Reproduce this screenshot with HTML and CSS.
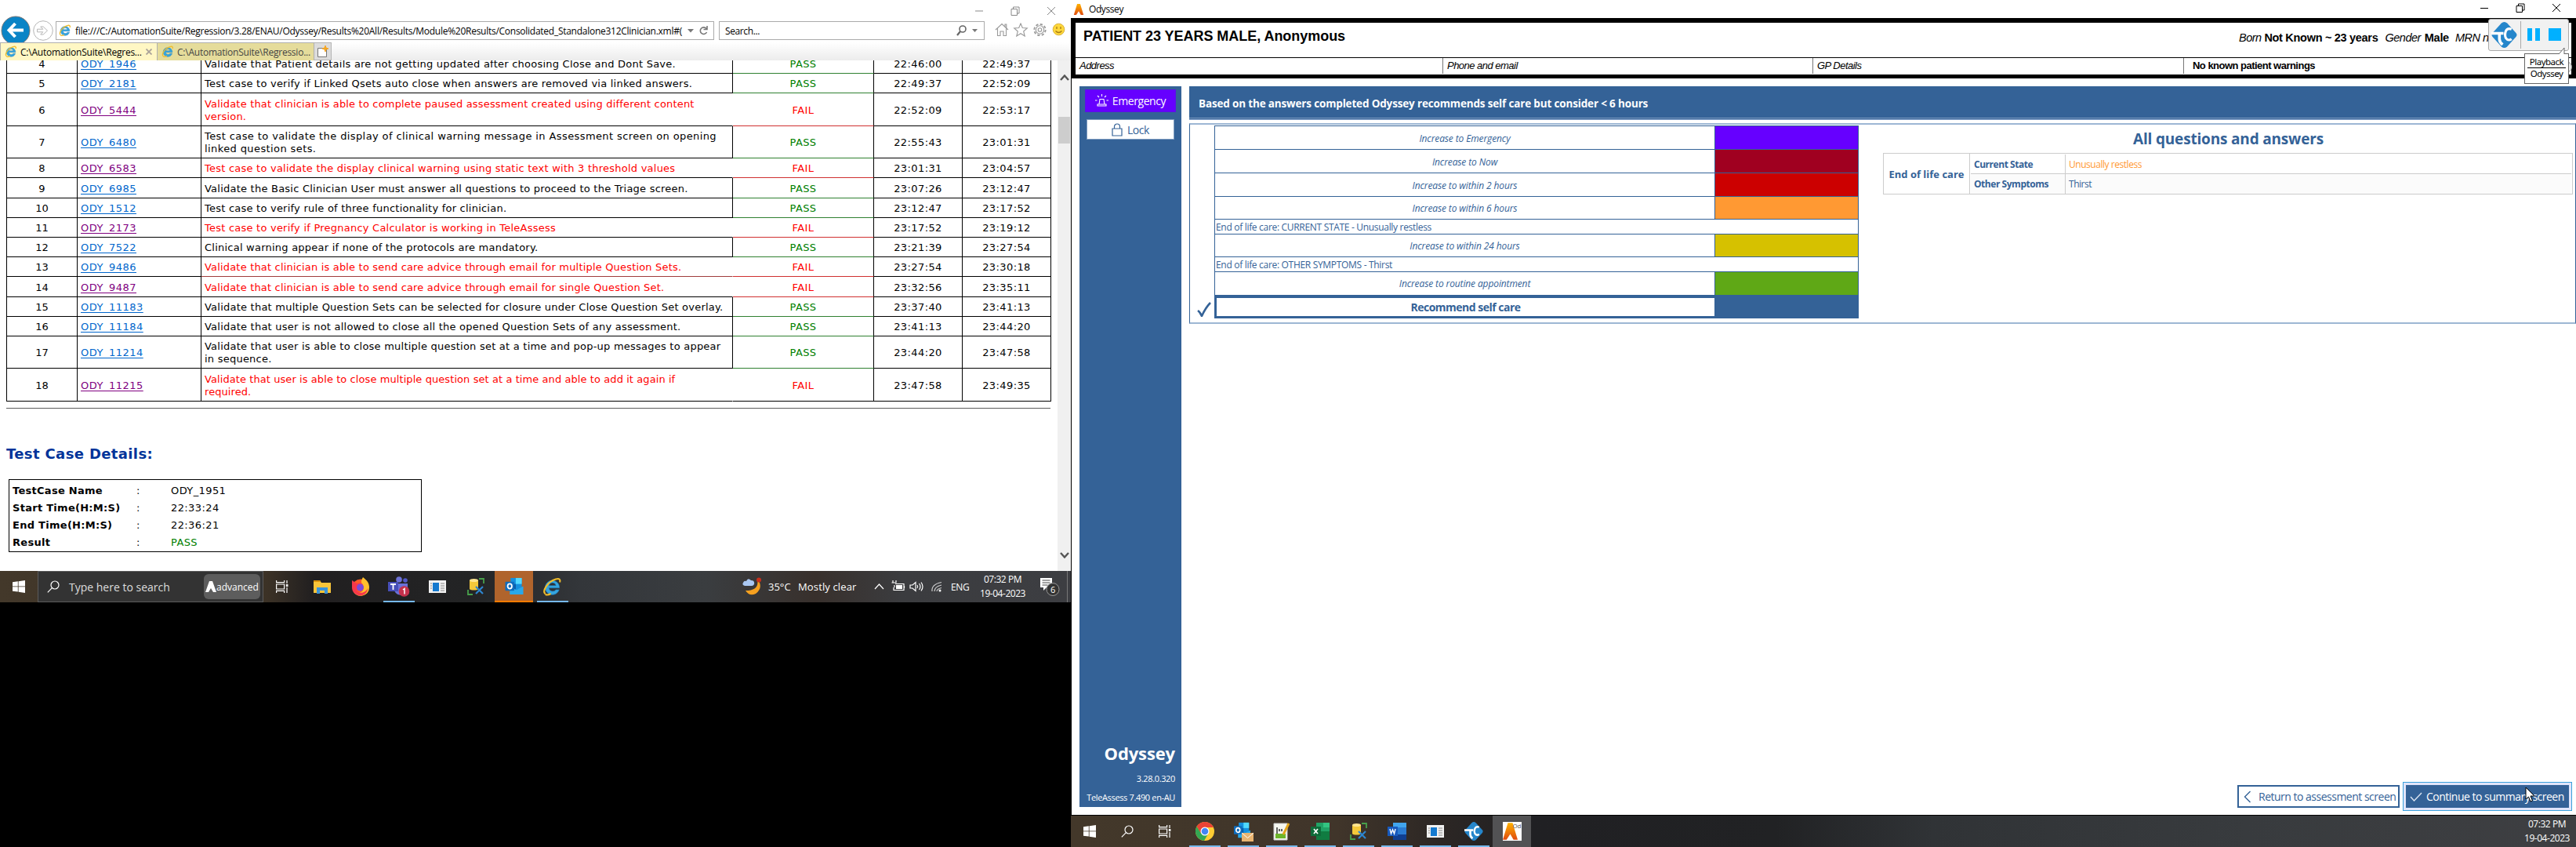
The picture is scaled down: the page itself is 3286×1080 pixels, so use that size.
FILE: index.html
```html
<!DOCTYPE html>
<html lang="en">
<head>
<meta charset="utf-8">
<title>Odyssey regression run</title>
<link rel="stylesheet" href="styles.css">
</head>
<body>
<svg width="0" height="0" class="defs">
  <symbol id="ie" viewBox="0 0 20 20"><path d="M17 11H6.500a4 4 0 0 0 7.200 1.700H17A7.300 7.300 0 1 1 17.300 11ZM6.600 8.500h7.200a3.700 3.700 0 0 0-7.200 0Z" fill="#35a5df" stroke="#1b78b8" stroke-width=".5"/><path d="M3 17C-1 15 5 4.500 13.500 2c4-1.200 5 .5 4.200 3.200M3 17.500c1.500 1 3.800.3 5.500-.7" fill="none" stroke="#f0bd2c" stroke-width="1.700"/></symbol>
  <symbol id="win" viewBox="0 0 16 16"><path d="M0 2.200 6.800 1.300V7.500H0ZM7.600 1.200 16 0V7.500H7.600ZM0 8.300H6.800V14.600L0 13.700ZM7.600 8.300H16V16L7.600 14.800Z" fill="#fff"/></symbol>
  <symbol id="search" viewBox="0 0 16 16"><g fill="none" stroke="#fff" stroke-width="1.200"><circle cx="10" cy="6" r="5"/><path d="M6.400 9.600.8 15.300"/></g></symbol>
  <symbol id="task" viewBox="0 0 16 16"><g fill="none" stroke="#fff" stroke-width="1.200"><path d="M.6 0v2.600h10V0M.6 16v-2.600h10V16M.6 5h10v6H.6ZM14 0v4M14 9v7"/></g><path d="M12.800 5h2.600v3h-2.600Z" fill="#fff"/></symbol>
  <symbol id="ssms" viewBox="0 0 22 22"><path d="M15 1h6v6M1 15v6h6" fill="none" stroke="#47a04b" stroke-width="1.800"/><path d="M3 3v11c1 2 10 2 11 0V3Z" fill="#f5c93a"/><ellipse cx="8.500" cy="3" rx="5.500" ry="2" fill="#ffe590"/><path d="m11 11 9 9M20 11l-9 9" stroke="#2d86d0" stroke-width="2.200"/></symbol>
  <symbol id="app" viewBox="0 0 22 18"><path d="M0 1h22v16H0Z" fill="#f1f1f1"/><path d="M5 4h8v11H5Z" fill="#1479cf"/><path d="M15 5h5M15 8h5M15 11h5M15 14h5M2 5h2M2 8h2M2 11h2" stroke="#888"/></symbol>
  <symbol id="outlook" viewBox="0 0 24 24"><path d="M7 1h15v17H7Z" fill="#1490df"/><path d="M14 1h8v8h-8Z" fill="#50d9ff"/><path d="M7 9h7v9H7Z" fill="#0a5ca8"/><path d="M6 12l9 5 9-5v11H6Z" fill="#28a8ea"/><rect x="0" y="6" width="12" height="12" rx="1" fill="#0f6cbd"/><ellipse cx="6" cy="12" rx="2.800" ry="3.200" fill="none" stroke="#fff" stroke-width="1.900"/></symbol>
  <symbol id="tc" viewBox="0 0 32 32"><path d="M16 0q2 0 3.500 1.500l11 12q2 2.500 0 5l-11 12q-3.500 3-7 0l-11-12q-2-2.500 0-5l11-12Q14 0 16 0Z" fill="#2586cb"/><path d="M0 14h15M10 14v7q0 4 4 7" stroke="#fff" stroke-width="3.500" fill="none"/><path d="M25 9q-5-2-7 2-2 5 0 9 3 4 7 1" stroke="#fff" stroke-width="3" fill="none"/></symbol>
  <symbol id="ody" viewBox="0 0 16 18"><path d="M5.500 0h5L16 18h-4.500L8 12 4 18H0Z" fill="url(#og)"/></symbol>
  <linearGradient id="og" x2="0" y2="1"><stop stop-color="#ffb300"/><stop offset="1" stop-color="#df4b10"/></linearGradient>
</svg>

<main class="screen left">
  <section class="browser">
    <div class="caption">
      <svg class="cap" viewBox="0 0 12 12"><path d="M1 6h10"/></svg>
      <svg class="cap" viewBox="0 0 12 12"><path d="M1 3.500h7.500V11.500H1ZM3.500 3.500V1H11V9H8.500"/></svg>
      <svg class="cap" viewBox="0 0 12 12"><path d="M1 1l10 10M11 1 1 11"/></svg>
    </div>
    <div class="navbar">
      <svg class="back" viewBox="0 0 38 38"><circle cx="19" cy="19" r="18" fill="#0a84c6" stroke="#777"/><path d="M29 18.500H12M18.500 10 10.500 18.500l8 8.500" fill="none" stroke="#fff" stroke-width="4"/></svg>
      <svg class="fwd" viewBox="0 0 26 26"><g fill="none" stroke="#b5b5b5"><circle cx="13" cy="13" r="12.300"/><path d="M5.500 11.200h7.300L9.700 8h3.500l5.300 5-5.300 5H9.700l3.100-3.200H5.500Z"/></g></svg>
      <div class="field url"><svg class="i16"><use href="#ie"/></svg><span class="urltext">file:///C:/AutomationSuite/Regression/3.28/ENAU/Odyssey/Results%20All/Results/Module%20Results/Consolidated_Standalone312Clinician.xml#(</span>
        <svg class="urlctl" viewBox="0 0 28 14"><path d="M0 5h8L4 9.500Z" fill="#777"/><path d="M24 4.500a4.300 4.300 0 1 0 .5 4.500M25 1v4.500h-4.500" fill="none" stroke="#777" stroke-width="1.600"/></svg></div>
      <div class="field find"><span class="findtext">Search...</span>
        <svg class="urlctl" viewBox="0 0 28 14"><circle cx="8" cy="5" r="4" fill="none" stroke="#666" stroke-width="1.600"/><path d="M5 8 1 13" stroke="#666" stroke-width="2.200"/><path d="M20 5h7L23.500 9Z" fill="#777"/></svg></div>
      <svg class="tools" viewBox="0 0 90 18"><g fill="none" stroke="#999" stroke-width="1.100"><path d="M1 9 9 1.500 17 9M3.500 7.500V16.500H7V11h4v5.500h3.500V7.500M13 5V2h1.800v4.500"/><path d="m33 1 2.300 5.500 6 .5-4.600 4 1.500 6L33 13.700 27.800 17l1.500-6-4.600-4 6-.5Z"/><circle cx="57.500" cy="9" r="6.800" stroke-width="2.600" stroke-dasharray="3.100 2.240"/><circle cx="57.500" cy="9" r="5.800" stroke="#fff"/><circle cx="57.500" cy="9" r="5.200"/><circle cx="57.500" cy="9" r="2.300"/></g><circle cx="81.500" cy="8.500" r="7.300" fill="#ffd83b" stroke="#d9b13a"/><path d="M79 5v3M84 5v3M77.500 10.500q4 4 8 0" fill="none" stroke="#a57b18" stroke-width="1.300"/></svg>
    </div>
    <div class="tabs">
      <div class="tab on"><svg class="i16"><use href="#ie"/></svg><span>C:\AutomationSuite\Regres...</span><svg class="close" viewBox="0 0 8 8"><path d="m.5.5 7 7m0-7-7 7" stroke="#aaa29a" stroke-width="1.800"/></svg></div>
      <div class="tab off"><svg class="i16"><use href="#ie"/></svg><span>C:\AutomationSuite\Regressio...</span></div>
      <div class="newtab"><svg width="16" height="16" viewBox="0 0 16 16"><path d="M1.500 3.500h11v11h-11Z" fill="#fff" stroke="#777"/><path d="m11 0 1 3 3 1-3 1-1 3-1-3-3-1 3-1Z" fill="#f5a623" stroke="#f5a623"/></svg></div>
    </div>
    <div class="page">
      <div class="report">
        <div class="results">
          <div class="r h25"><b>4</b><a>ODY_1946</a><p>Validate that Patient details are not getting updated after choosing Close and Dont Save.</p><i>PASS</i><time>22:46:00</time><time>22:49:37</time></div>
          <div class="r h25"><b>5</b><a>ODY_2181</a><p>Test case to verify if Linked Qsets auto close when answers are removed via linked answers.</p><i>PASS</i><time>22:49:37</time><time>22:52:09</time></div>
          <div class="r h42 fail snug"><b>6</b><a class="seen">ODY_5444</a><p>Validate that clinician is able to complete paused assessment created using different content<br>version.</p><i>FAIL</i><time>22:52:09</time><time>22:53:17</time></div>
          <div class="r h41 loose"><b>7</b><a>ODY_6480</a><p>Test case to validate the display of clinical warning message in Assessment screen on opening<br>linked question sets.</p><i>PASS</i><time>22:55:43</time><time>23:01:31</time></div>
          <div class="r h25 fail"><b>8</b><a class="seen">ODY_6583</a><p>Test case to validate the display clinical warning using static text with 3 threshold values</p><i>FAIL</i><time>23:01:31</time><time>23:04:57</time></div>
          <div class="r h26"><b>9</b><a>ODY_6985</a><p>Validate the Basic Clinician User must answer all questions to proceed to the Triage screen.</p><i>PASS</i><time>23:07:26</time><time>23:12:47</time></div>
          <div class="r h25"><b>10</b><a>ODY_1512</a><p>Test case to verify rule of three functionality for clinician.</p><i>PASS</i><time>23:12:47</time><time>23:17:52</time></div>
          <div class="r h25 fail"><b>11</b><a class="seen">ODY_2173</a><p>Test case to verify if Pregnancy Calculator is working in TeleAssess</p><i>FAIL</i><time>23:17:52</time><time>23:19:12</time></div>
          <div class="r h25"><b>12</b><a>ODY_7522</a><p>Clinical warning appear if none of the protocols are mandatory.</p><i>PASS</i><time>23:21:39</time><time>23:27:54</time></div>
          <div class="r h25 fail redline snug"><b>13</b><a>ODY_9486</a><p>Validate that clinician is able to send care advice through email for multiple Question Sets.</p><i>FAIL</i><time>23:27:54</time><time>23:30:18</time></div>
          <div class="r h26 fail snug"><b>14</b><a class="seen">ODY_9487</a><p>Validate that clinician is able to send care advice through email for single Question Set.</p><i>FAIL</i><time>23:32:56</time><time>23:35:11</time></div>
          <div class="r h25"><b>15</b><a>ODY_11183</a><p>Validate that multiple Question Sets can be selected for closure under Close Question Set overlay.</p><i>PASS</i><time>23:37:40</time><time>23:41:13</time></div>
          <div class="r h25"><b>16</b><a>ODY_11184</a><p>Validate that user is not allowed to close all the opened Question Sets of any assessment.</p><i>PASS</i><time>23:41:13</time><time>23:44:20</time></div>
          <div class="r h41"><b>17</b><a>ODY_11214</a><p>Validate that user is able to close multiple question set at a time and pop-up messages to appear<br>in sequence.</p><i>PASS</i><time>23:44:20</time><time>23:47:58</time></div>
          <div class="r h42 fail last"><b>18</b><a class="seen">ODY_11215</a><p>Validate that user is able to close multiple question set at a time and able to add it again if<br>required.</p><i>FAIL</i><time>23:47:58</time><time>23:49:35</time></div>
        </div>
        <div class="rule"></div>
        <h2>Test Case Details:</h2>
        <dl class="details">
          <dt>TestCase Name</dt><dd>:</dd><dd>ODY_1951</dd>
          <dt>Start Time(H:M:S)</dt><dd>:</dd><dd>22:33:24</dd>
          <dt>End Time(H:M:S)</dt><dd>:</dd><dd>22:36:21</dd>
          <dt>Result</dt><dd>:</dd><dd class="green">PASS</dd>
        </dl>
      </div>
      <div class="scroll"><svg viewBox="0 0 12 8"><path d="m1 7 5-5.500L11 7"/></svg><div class="thumb"></div><svg viewBox="0 0 12 8"><path d="m1 1 5 5.500L11 1"/></svg></div>
    </div>
  </section>
  <footer class="bar lbar">
    <div class="start"><svg class="i16"><use href="#win"/></svg></div>
    <div class="sbox"><svg class="i16"><use href="#search"/></svg><span class="stext">Type here to search</span>
      <div class="adv"><svg width="14" height="15" viewBox="0 0 14 15"><path d="M5 0h4l5 14h-4L7 9l-3 5H0Z" fill="#fff"/></svg><span>advanced</span></div></div>
    <div class="apps">
      <div class="a"><svg class="i16"><use href="#task"/></svg></div>
      <div class="a"><svg width="22" height="20" viewBox="0 0 22 20"><path d="M0 2h8l2 3h12v13H0Z" fill="#f8c53a"/><path d="M0 2h8l1 2H0Z" fill="#d9930c"/><path d="M4 11h14v8h-4v-4H8v4H4Z" fill="#3b94d9"/></svg></div>
      <div class="a"><svg width="24" height="24" viewBox="0 0 24 24"><circle cx="12" cy="13" r="10.500" fill="#ff5a26"/><path d="M15 0c5 4 8 7 8 13a11 11 0 0 1-20 6c9 4 15-3 12-8-1-3-4-4 0-11Z" fill="#ffc02c"/><path d="M1 4l6 4c8-2 9 2 8 5s-5 5-9 3c5 7 13 3 15-2 0 6-5 9.500-9 9.500A10.500 10.500 0 0 1 1 13Z" fill="#f6384b"/><circle cx="11.500" cy="13" r="4.500" fill="#7a4ad8"/></svg></div>
      <div class="a run"><svg width="28" height="26" viewBox="0 0 28 26"><circle cx="14" cy="4" r="3.800" fill="#6d72d8"/><circle cx="22" cy="5" r="2.800" fill="#5059c9"/><path d="M8 9h17v7q-1 8-8 8-9-1-9-8Z" fill="#6970d8"/><path d="M0 7h13v12H0Z" fill="#474fb9"/><path d="M3 10h7M6.500 10v7" stroke="#fff" stroke-width="1.800"/><circle cx="20.500" cy="19" r="6.800" fill="#c4314b"/><path d="M19 17l2-1.500V22.500" fill="none" stroke="#fff" stroke-width="1.500"/></svg></div>
      <div class="a"><svg width="22" height="18"><use href="#app"/></svg></div>
      <div class="a"><svg width="22" height="22"><use href="#ssms"/></svg></div>
      <div class="a hot"><svg width="24" height="23"><use href="#outlook"/></svg></div>
      <div class="a run"><svg width="25" height="25"><use href="#ie"/></svg></div>
    </div>
    <div class="tray">
      <svg width="24" height="24" viewBox="0 0 24 24"><path d="M19 3q3 14-15 14 5 8 13 4 8-6 5-14Z" fill="#f5a01f"/><circle cx="21" cy="3.500" r="3" fill="#c9301c"/><path d="M3 11q-4-1-2-4 1-3 4-2 2-5 6-1 5 0 4 5-1 2-3 2Z" fill="#a9c7f2"/></svg>
      <span class="w1">35°C</span><span class="w2">Mostly clear</span>
      <svg class="sys" width="90" height="16" viewBox="0 0 90 16"><g fill="none" stroke="#fff" stroke-width="1.200"><path d="m1 11 5.500-6 5.500 6M27 4.500h11v8H25V9M38.500 7v3M24 0v3M28 0v3M22.500 3h6M26 6v3M46 6h3l4-3.500v11L49 10h-3ZM55 6q1.500 2 0 4M57.500 4q3 4 0 8M60 2.500q4 5.500 0 11"/><g stroke="#ccc"><path d="M74 14Q73 5 86 2.500M77 14q0-6 9-8M80 14q0-3 6-4.500"/></g></g><path d="M28 6h8v5h-8Z" fill="#fff"/><circle cx="84" cy="13" r="1.500" fill="#fff"/></svg>
      <span class="eng">ENG</span>
      <div class="clock"><span>07:32 PM</span><span>19-04-2023</span></div>
      <svg class="note" width="26" height="24" viewBox="0 0 26 24"><path d="M0 1h15v12H8l-4 4v-4H0Z" fill="#fff"/><path d="M2.500 4h10M2.500 7h10M2.500 10h7" stroke="#444"/><circle cx="16" cy="15.500" r="8" fill="#333" stroke="#999"/><text x="13" y="19.500" fill="#fff" font-size="11">6</text></svg>
    </div>
  </footer>
</main>

<aside class="screen right">
  <section class="odyssey">
    <div class="title"><svg width="16" height="14"><use href="#ody"/></svg><span>Odyssey</span>
      <div class="caption2"><svg class="cap" viewBox="0 0 12 12"><path d="M1 6.500h10"/></svg><svg class="cap" viewBox="0 0 12 12"><path d="M1 3.500h7.500V11.500H1ZM3.500 3.500V1H11V9H8.500"/></svg><svg class="cap" viewBox="0 0 12 12"><path d="M1 1l10 10M11 1 1 11"/></svg></div></div>
    <header class="patient">
      <div class="prow"><h1>PATIENT 23 YEARS MALE, Anonymous</h1>
        <p class="born"><em>Born</em> <strong>Not Known ~ 23 years</strong><em class="g1">Gender</em><strong class="g2">Male</strong><em class="g3">MRN nu</em></p></div>
      <div class="pcells"><em>Address</em><em>Phone and email</em><em>GP Details</em><strong>No known patient warnings</strong></div>
    </header>
    <div class="work">
      <nav class="side">
        <button class="btn emer"><svg width="17" height="17" viewBox="0 0 17 17"><path d="M5 13 6 6.500h5L12 13M3 15V13h11v2ZM8.500 0v3M3 2l2 2M14 2l-2 2M0 8h2.500M14.500 8H17" fill="none" stroke="#fff" stroke-width="1.100"/></svg><span>Emergency</span></button>
        <button class="btn lock"><svg width="14" height="17" viewBox="0 0 14 17"><path d="M1 7h12v9H1ZM3.500 7V4.500a3.500 3.500 0 0 1 7 0V7" fill="none" stroke="#346297" stroke-width="1.200"/></svg><span>Lock</span></button>
        <div class="about"><h3>Odyssey</h3><p>3.28.0.320</p><p>TeleAssess 7.490 en-AU</p></div>
      </nav>
      <div class="main">
        <div class="banner">Based on the answers completed Odyssey recommends self care but consider &lt; 6 hours</div>
        <div class="panel">
          <div class="tick"><svg width="18" height="19" viewBox="0 0 18 19"><path d="M1 11q3 2 5 7Q11 7 17 1" fill="none" stroke="#346297" stroke-width="2.600"/></svg></div>
          <div class="triage">
            <div class="t h30"><span>Increase to Emergency</span><i class="c1"></i></div>
            <div class="t h30"><span>Increase to Now</span><i class="c2"></i></div>
            <div class="t h30"><span>Increase to within 2 hours</span><i class="c3"></i></div>
            <div class="t h29"><span>Increase to within 6 hours</span><i class="c4"></i></div>
            <div class="why">End of life care: CURRENT STATE - Unusually restless</div>
            <div class="t h29"><span>Increase to within 24 hours</span><i class="c5"></i></div>
            <div class="why">End of life care: OTHER SYMPTOMS - Thirst</div>
            <div class="t h29 final"><span>Increase to routine appointment</span><i class="c6"></i></div>
            <div class="t chosen"><strong>Recommend self care</strong><i></i></div>
          </div>
          <div class="answers">
            <h2>All questions and answers</h2>
            <div class="qa"><strong class="topic">End of life care</strong>
              <div class="qrows"><div class="q"><strong>Current State</strong><span class="orange">Unusually restless</span></div><div class="q alt"><strong>Other Symptoms</strong><span>Thirst</span></div></div></div>
          </div>
        </div>
        <div class="actions">
          <button class="act ret"><svg width="10" height="16" viewBox="0 0 10 16"><path d="M8.500 1 1.500 8l7 7" fill="none" stroke="#346297" stroke-width="1.400"/></svg><span>Return to assessment screen</span></button>
          <div class="focus"><button class="act go"><svg width="16" height="12" viewBox="0 0 16 12"><path d="M1 6l4.500 5L15 1" fill="none" stroke="#dce6f2" stroke-width="1.400"/></svg><span>Continue to summary screen</span></button></div>
        </div>
      </div>
    </div>
    <div class="help"></div>
    <div class="player"><svg width="33" height="33"><use href="#tc"/></svg><svg class="pp" width="44" height="16"><path d="M0 0h6v16H0ZM10 0h6v16H10ZM27 0h16v16H27Z" fill="#00b0ff"/></svg></div>
    <div class="tip"><span>Playback</span><span>Odyssey</span></div>
    <svg class="beak" width="10" height="10" viewBox="0 0 10 10"><path d="M0 9 7 1V9" fill="#fff" stroke="#666"/></svg>
    <svg class="cursor" width="13" height="20" viewBox="0 0 13 20"><path d="M1 1v15l3.500-3 2.500 6 2.500-1-2.500-6h5Z" fill="#fff" stroke="#000"/></svg>
  </section>
  <footer class="bar rbar">
    <div class="b"><svg class="i16"><use href="#win"/></svg></div>
    <div class="b"><svg class="i16"><use href="#search"/></svg></div>
    <div class="b"><svg class="i16"><use href="#task"/></svg></div>
    <div class="b run"><svg width="24" height="24" viewBox="0 0 24 24"><circle cx="12" cy="12" r="12" fill="#fc3"/><path d="M1.600 6A12 12 0 0 1 22.400 6L23 7H12L7 15Z" fill="#ea4335"/><path d="M1.600 6A12 12 0 0 0 11 24l5-8.500-9-1Z" fill="#34a853"/><circle cx="12" cy="12" r="5.500" fill="#fff"/><circle cx="12" cy="12" r="4.300" fill="#4285f4"/></svg></div>
    <div class="b run"><svg width="26" height="25" viewBox="0 0 26 25"><svg width="23" height="21"><use href="#outlook"/></svg><path d="M11 14h15v11H11Z" fill="#e9b571"/><path d="m11 14 7.500 6.500L26 14" fill="none" stroke="#fff"/></svg></div>
    <div class="b run"><svg width="22" height="24" viewBox="0 0 22 24"><path d="M1 2h17v21H1Z" fill="#f5f7f0" stroke="#ccc"/><path d="M3 15h13v6H3Z" fill="#6db52b"/><path d="M5 7v8M8 9v3M11 9v3" stroke="#333" stroke-width="1.500"/><path d="M20 2 13 16" stroke="#e3a51b" stroke-width="3"/></svg></div>
    <div class="b run"><svg width="24" height="22" viewBox="0 0 24 22"><path d="M7 0h17v22H7Z" fill="#21a366"/><path d="M7 11h17v11H7Z" fill="#107c41"/><path d="M16 0h8v6h-8Z" fill="#33c481"/><path d="M0 5h13v12H0Z" fill="#0f6b39"/><path d="m4 8 5 6M9 8l-5 6" stroke="#fff" stroke-width="1.700"/></svg></div>
    <div class="b run"><svg width="22" height="22"><use href="#ssms"/></svg></div>
    <div class="b run"><svg width="24" height="22" viewBox="0 0 24 22"><path d="M7 0h17v22H7Z" fill="#2b7cd3"/><path d="M7 0h17v6H7Z" fill="#41a5ee"/><path d="M7 15h17v7H7Z" fill="#103f91"/><path d="M0 5h13v12H0Z" fill="#185abd"/><path d="m3 8 1.500 6 2-5 2 5L10 8" fill="none" stroke="#fff" stroke-width="1.400"/></svg></div>
    <div class="b run"><svg width="22" height="18"><use href="#app"/></svg></div>
    <div class="b run"><svg width="24" height="24"><use href="#tc"/></svg></div>
    <div class="b cur"><div class="odyapp"><svg width="19" height="24"><use href="#ody"/></svg><small>Od</small></div></div>
    <div class="clock rclock"><span>07:32 PM</span><span>19-04-2023</span></div>
  </footer>
</aside>
</body>
</html>
```
FILE: styles.css
```css
* { box-sizing: border-box; }
body { margin: 0; display: flex; width: 3286px; height: 1080px; overflow: hidden; background: #000; font-family: "Open Sans", "Noto Sans", sans-serif; font-size: 12px; color: #000; }
h1, h2, h3, p, dl, dd { margin: 0; }
svg { flex: none; display: block; }
.defs { position: absolute; }
span, em, strong, small { white-space: pre; }
button { font: inherit; border: 0; padding: 0; letter-spacing: inherit; }
.screen { flex: none; }
.left { width: 1366px; height: 768px; }
.right { width: 1920px; height: 1080px; }
.i16 { width: 16px; height: 16px; }
.cap { width: 12px; height: 12px; fill: none; stroke: #888; }

/* browser window */
.browser { height: 728px; background: #fff; display: flex; flex-direction: column; }
.caption { height: 20px; display: flex; justify-content: flex-end; align-items: flex-end; gap: 34px; padding: 0 19px 0 0; }
.navbar { height: 34px; display: flex; align-items: flex-start; }
.back { width: 38px; height: 38px; margin: 0 0 0 1px; }
.fwd { width: 26px; height: 26px; margin: 6px 3px 0; }
.field { margin-top: 7px; height: 24px; border: 1px solid #ababab; display: flex; align-items: center; background: #fff; font-size: 12px; }
.url { width: 840px; padding: 0 5px 0 3px; }
.urltext { margin-left: 5px; flex: 1; letter-spacing: -.265px; }
.urlctl { width: 28px; height: 14px; }
.find { width: 339px; margin-left: 6px; padding: 0 7px; justify-content: space-between; }
.findtext { letter-spacing: -.39px; }
.tools { width: 90px; height: 18px; margin: 9px 0 0 13px; }
.tabs { height: 23px; display: flex; background: linear-gradient(#fff, #ececec); font-size: 12px; letter-spacing: -.23px; position: relative; }
.tab { height: 23px; border: 1px solid #b0b0b0; border-bottom: 0; display: flex; align-items: center; padding-left: 5px; gap: 4px; }
.on { width: 201px; background: #fff7c4; }
.off { width: 200px; background: #e5dc9b; color: #444; border-left: 0; }
.close { width: 8px; height: 8px; margin-left: 1px; }
.newtab { width: 22px; border: 1px solid #b5b5b5; border-left: 0; background: #dcdcdc; padding: 3px 3px; }
.page { flex: 1; display: flex; overflow: hidden; min-height: 0; }
.report { flex: 1; padding-left: 8px; font: 13px/16px "DejaVu Sans", Verdana, sans-serif; }
.results { width: 1333px; margin-top: -8px; border-left: 1px solid #000; }
.r { display: grid; grid-template-columns: 90px 158px 678px 180px 113px 113px; }
.h25 { height: 25px; } .h26 { height: 26px; } .h41 { height: 41px; } .h42 { height: 42px; }
.r > * { border-right: 1px solid #000; border-bottom: 1px solid #000; display: flex; align-items: center; justify-content: center; font: inherit; padding-top: 2px; white-space: nowrap; }
.r > time, .r > i { letter-spacing: .4px; }
.r > a { justify-content: flex-start; padding-left: 4px; color: #0066cc; text-decoration: underline; text-underline-offset: 2px; letter-spacing: .49px; }
.r > a.seen { color: #800080; }
.r > p { display: block; padding-left: 4px; align-content: center; letter-spacing: .233px; }
.r.snug > p { letter-spacing: .18px; }
.r.loose > p { letter-spacing: .4px; }
.r > i { color: #008000; border-bottom-color: #2f8030; }
.r.fail > p { color: #f00; border-right-color: transparent; }
.r.fail > i { color: #f00; border-bottom-color: #d03030; }
.redline > p { border-bottom-color: #a03c3c; }
.r.last > i { border-bottom-color: #000; }
.r.last > p { letter-spacing: .08px; }
.rule { height: 2px; width: 1332px; margin-top: 8px; background: #666; border-bottom: 1px solid #eee; }
.report h2 { font-size: 18px; line-height: 24px; margin-top: 45px; color: #003399; letter-spacing: .37px; }
.details { width: 527px; height: 93px; border: 1px solid #000; margin: 20px 0 0 3px; padding: 3px 4px; display: grid; grid-template-columns: 158px 44px 1fr; grid-auto-rows: 22px; line-height: 22px; letter-spacing: .4px; }
.details dt { font-weight: bold; letter-spacing: .28px; }
.green { color: #008000; }
.scroll { width: 17px; background: #f0f0f0; display: flex; flex-direction: column; align-items: center; padding: 18px 0 16px; }
.scroll svg { width: 12px; height: 8px; fill: none; stroke: #555; stroke-width: 2.4; }
.thumb { width: 15px; height: 34px; background: #cdcdcd; margin: 46px 0 auto; }

/* taskbars */
.bar { height: 40px; display: flex; color: #fff; font-size: 12px; }
.lbar { background: linear-gradient(90deg, #43382a 0, #3c3226 340px, #211f20 400px, #232425 600px, #33363a 740px, #3a3d40 900px, #38302c 1040px, #3b3c3f 1150px, #3d3e42 1366px); }
.start { width: 48px; padding: 12px 16px; }
.sbox { width: 288px; border: 1px solid #5b5b5b; background: #333; display: flex; align-items: center; padding-left: 11px; }
.stext { margin-left: 12px; color: #ddd; font-size: 14px; width: 172px; }
.adv { width: 72px; height: 32px; border-radius: 6px; background: #5d5d5d; display: flex; align-items: center; justify-content: center; font-size: 12px; }
.apps { display: flex; width: 394px; flex: none; }
.a { width: 49px; height: 40px; flex: none; display: flex; align-items: center; justify-content: center; }
.a:first-child { width: 48px; margin-right: 2px; }
.run { background: linear-gradient(#76b9ed, #76b9ed) center bottom / 40px 2px no-repeat; }
.hot { background: #b0642c; border-bottom: 2px solid #ff7b00; }
.tray { display: flex; align-items: center; margin-left: 217px; height: 40px; flex: 1; border-right: 1px solid #777; margin-right: 4px; }
.w1 { margin-left: 9px; font-size: 13px; width: 38px; }
.w2 { width: 97px; font-size: 13px; letter-spacing: .14px; }
.eng { margin-left: 8px; width: 29px; letter-spacing: -.4px; }
.clock { display: flex; flex-direction: column; align-items: center; line-height: 18px; width: 74px; letter-spacing: -.46px; }
.note { margin-left: 11px; }

/* Odyssey window */
.odyssey { height: 1040px; background: #fff; border-bottom: 1px solid #000; position: relative; }
.title { height: 23px; display: flex; align-items: center; padding: 0 0 0 2px; gap: 5px; letter-spacing: -.41px; }
.caption2 { margin-left: auto; display: flex; gap: 34px; padding: 0 19px 3px 0; }
.caption2 .cap { stroke: #000; }
.patient { height: 77px; border: 6px solid #000; border-bottom-width: 5px; font-family: "Liberation Sans", Arial, sans-serif; }
.prow { height: 45px; display: flex; justify-content: space-between; border-bottom: 1px solid #000; }
.prow h1 { font-size: 18px; line-height: 21px; padding: 7px 0 0 10px; letter-spacing: -.04px; }
.born { font-size: 14.5px; line-height: 20px; padding-top: 9px; width: 424px; letter-spacing: -.3px; white-space: nowrap; }
.born em { letter-spacing: -.5px; }
.g1 { margin-left: 9px; } .g2 { margin-left: 5px; } .g3 { margin-left: 8px; }
.pcells { display: grid; grid-template-columns: 469px 472px 473px 1fr; height: 20px; font-size: 13px; line-height: 20px; letter-spacing: -.52px; }
.pcells > * { border-right: 1px solid #777; padding-left: 5px; }
.pcells > strong { border: 0; padding-left: 11px; }
.work { display: flex; height: 939px; border-left: 1px solid #000; padding: 10px 0 0 10px; }
.side { width: 130px; flex: none; height: 919px; background: #346297; padding: 4px 7px 0; display: flex; flex-direction: column; color: #fff; }
.btn { display: flex; align-items: center; justify-content: center; gap: 5px; font-size: 14px; letter-spacing: -.42px; }
.emer { height: 29px; background: #60f; color: #fff; border: 1px solid #5a10e8; }
.lock { height: 26px; margin: 9px 2px 0; background: #fff; color: #346297; gap: 6px; border: 1px solid #7f9cc0; }
.about { margin-top: auto; text-align: right; padding: 0 1px 0 0; font-size: 11px; letter-spacing: -.35px; white-space: nowrap; }
.about h3 { font-size: 22px; line-height: 30px; letter-spacing: -.12px; }
.about p { height: 24px; line-height: 24px; }
.about p:first-of-type { margin-top: 6px; }
.main { width: 1769px; flex: none; display: flex; flex-direction: column; margin-left: 10px; color: #346297; }
.banner { height: 43px; background: #346297; color: #fff; font-weight: bold; font-size: 13.5px; line-height: 44px; padding-left: 12px; letter-spacing: -.16px; border-bottom: 1px solid #8aa6cc; box-shadow: inset 0 -1px #346297, inset 0 -2px #7c9ac0; }
.panel { height: 256px; margin-top: 4px; border: 1px solid #346297; border-top: 2px solid #9db7d4; border-bottom: 2px solid #9db7d4; display: flex; }
.tick { width: 31px; flex: none; padding: 226px 0 0 9px; }
.triage { width: 822px; flex: none; height: 246px; margin-top: 1px; border: 1px solid #346297; border-bottom: 0; }
.t { display: flex; border-bottom: 1px solid #346297; font-style: italic; letter-spacing: -.12px; }
.t > span, .t > strong { flex: 1; text-align: center; line-height: 31px; }
.t > i { width: 183px; border-left: 1px solid #346297; }
.h30 { height: 30px; } .h29 { height: 29px; }
.h29 > span { line-height: 29px; }
.final { border-bottom: 0; }
.why { height: 19px; line-height: 19px; padding-left: 1px; border-bottom: 1px solid #346297; letter-spacing: -.31px; }
.c1 { background: #60f; } .c2 { background: #a00020; } .c3 { background: #c00; } .c4 { background: #f93; } .c5 { background: #d6c100; } .c6 { background: #5fa816; }
.chosen { height: 30px; border: 0 solid #346297; border-width: 4px 0 3px 2px; font-style: normal; font-size: 14px; letter-spacing: -.51px; }
.chosen > strong { line-height: 23px; }
.chosen > i { background: #346297; }
.answers { width: 881px; flex: none; margin-left: 31px; }
.answers h2 { text-align: center; font-size: 19px; line-height: 26px; margin-top: 5px; letter-spacing: -.18px; }
.qa { display: flex; height: 53px; width: 880px; margin-top: 5px; border: 1px solid #ccc; font-size: 12px; }
.topic { width: 110px; border-right: 1px solid #ccc; text-align: center; line-height: 53px; font-size: 13px; }
.qrows { flex: 1; padding: 1px; letter-spacing: -.46px; }
.q { display: flex; height: 25px; line-height: 26px; border-bottom: 1px solid #ccc; }
.q.alt { background: #fbfbfb; border: 0; }
.q > strong { width: 121px; padding-left: 4px; border-right: 1px solid #ccc; }
.q > span { padding-left: 4px; }
.orange { color: #f93; }
.actions { margin: auto 5px 5px 0; display: flex; justify-content: flex-end; align-items: center; gap: 4px; font-size: 14px; letter-spacing: -.5px; }
.act { height: 29px; display: flex; align-items: center; color: #346297; }
.ret { width: 207px; border: 2px solid #346297; background: #fff; padding-left: 6px; gap: 9px; }
.focus { border: 1px solid #3aa0dc; background: #e0e4fa; padding: 3px; height: 37px; width: 216px; }
.go { background: #346297; color: #fff; width: 208px; padding-left: 5px; gap: 5px; }
.help { position: absolute; left: 1900px; top: 78px; width: 15px; height: 15px; border: 1px solid #999; border-radius: 8px; background: #eee; }
.player { position: absolute; left: 1808px; top: 24px; width: 103px; height: 41px; border: 1px solid #aaa; border-radius: 3px; background: #f1f1f1; padding: 3px; display: flex; }
.pp { margin: 8px 0 0 13px; }
.player::after { content: ""; position: absolute; left: 40px; top: 2px; height: 35px; border-left: 1px solid #aaa; }
.tip { position: absolute; left: 1854px; top: 68px; width: 57px; height: 39px; background: #fff; border: 1px solid #666; padding: 2px 3px; display: grid; align-content: start; text-align: center; font: 11.5px/14px "Noto Sans", sans-serif; letter-spacing: -.5px; }
.tip span:first-child { border-bottom: 1px solid #000; line-height: 15px; }
.beak { position: absolute; left: 1898px; top: 60px; }
.cursor { position: absolute; left: 1855px; top: 1003px; }
.rbar { background: linear-gradient(90deg, #43382a 0, #40352a 340px, #2b2624 480px, #202023 590px, #212224 900px, #303336 1100px, #383b3e 1500px, #3e3f42 1920px); }
.b { width: 49px; height: 40px; display: flex; align-items: center; justify-content: center; }
.b:nth-child(-n+3) { width: 48px; }
.b:nth-child(3) { margin-right: 2px; }
.cur { background-color: #525254; }
.odyapp { width: 24px; height: 24px; background: #fff; color: #555; position: relative; }
.odyapp small { position: absolute; right: 0; top: -1px; font-size: 8px; line-height: 12px; }
.rclock { margin: 2px 0 0 auto; }
```
